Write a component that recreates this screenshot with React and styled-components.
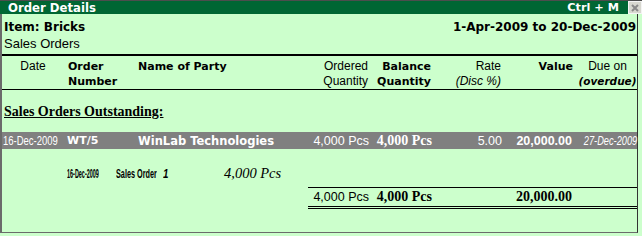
import React from "react";
import styled, { createGlobalStyle } from "styled-components";

const COLS = "62px 70px 166px 70px 63px 70px 75px 59px";
const SANS = `"Liberation Sans", Arial, sans-serif`;
const TAHOMA = `"DejaVu Sans", Verdana, sans-serif`;
const SERIF = `"Liberation Serif", "Times New Roman", serif`;

const JUSTIFY = { left: "flex-start", right: "flex-end", center: "center" };

const GlobalStyle = createGlobalStyle`
  html, body {
    margin: 0;
    padding: 0;
    background: #ccffcc;
  }
  body {
    font-family: ${SANS};
    color: #000;
  }
`;

const Screen = styled.div`
  width: 642px;
  height: 236px;
  overflow: hidden;
  background: #ccffcc;
`;

const TitleBar = styled.div`
  box-sizing: border-box;
  height: 14px;
  border-top: 1px solid #4d4d4d;
  background: #006633;
  color: #fff;
  display: flex;
  align-items: center;
  padding-left: 8px;
  font-family: ${TAHOMA};
  font-weight: bold;
`;

const Title = styled.span`
  font-size: 11.7px;
  flex: 1;
`;

const Shortcut = styled.span`
  font-size: 11.3px;
  margin-right: 9px;
`;

const CloseBox = styled.span`
  box-sizing: border-box;
  width: 14px;
  height: 13px;
  background: #d8d8d0;
  border: 1px solid #f4f4f4;
  display: flex;
  align-items: center;
  justify-content: center;
`;

const Panel = styled.div`
  box-sizing: border-box;
  width: 638px;
  height: 219px;
  border-left: 2px solid #6b6b6b;
  border-right: 1px solid #333;
  border-bottom: 1px solid #6b6b6b;
`;

const Heading = styled.div`
  padding: 5px 1px 0 2px;
  margin-bottom: 3px;
`;

const HeadLine = styled.div`
  display: flex;
  justify-content: space-between;
  height: 17px;
  line-height: 16px;
  font-family: ${TAHOMA};
  font-weight: bold;
  font-size: 12px;
`;

const SubHead = styled.div`
  font-size: 13px;
  line-height: 15px;
`;

const HeaderRow = styled.div`
  display: grid;
  grid-template-columns: ${COLS};
  border-top: 2px solid #000;
  border-bottom: 1px solid #000;
  padding-top: 3px;
`;

const HeadCell = styled.div`
  line-height: 15px;
  font-size: ${(p) => (p.$bold ? "11px" : "12px")};
  font-family: ${(p) => (p.$bold ? TAHOMA : SANS)};
  font-weight: ${(p) => (p.$bold ? "bold" : "normal")};
  text-align: ${(p) => p.$align || "left"};
  padding: ${(p) => p.$pad || "0"};
  white-space: nowrap;

  em {
    font-style: italic;
  }

  b em {
    font-family: ${TAHOMA};
    font-size: 10.5px;
  }
`;

const Section = styled.div`
  margin: 14px 0 12px 2px;
  font-family: ${SERIF};
  font-weight: bold;
  font-size: 14px;
  line-height: 16px;
  text-decoration: underline;
`;

const ItemRow = styled.div`
  display: grid;
  grid-template-columns: ${COLS};
  align-items: center;
  height: 17px;
  background: #808080;
  color: #fff;
`;

const Cell = styled.div`
  display: flex;
  justify-content: ${(p) => JUSTIFY[p.$align || "left"]};
  white-space: nowrap;
  padding: ${(p) => p.$pad || "0"};
  font-family: ${(p) => p.$font || SANS};
  font-size: ${(p) => p.$size || "12.5px"};
  font-weight: ${(p) => (p.$bold ? "bold" : "normal")};
  font-style: ${(p) => (p.$italic ? "italic" : "normal")};
`;

/* condensed face (the original uses a narrow font) */
const Squeeze = styled.span`
  display: inline-block;
  flex-shrink: 0;
  transform: scaleX(${(p) => p.$sx});
  transform-origin: ${(p) => p.$origin || "left"} center;
`;

const SubRow = styled.div`
  display: flex;
  align-items: center;
  height: 18px;
  margin-top: 15px;
  padding-left: 65px;
`;

const Tiny = styled.span`
  display: inline-block;
  width: ${(p) => p.$w}px;
  font-family: ${SANS};
  font-weight: bold;
  font-size: 13px;
  font-style: ${(p) => (p.$italic ? "italic" : "normal")};
  white-space: nowrap;
`;

const SubQty = styled.span`
  font-family: ${SERIF};
  font-style: italic;
  font-size: 14.5px;
  margin-left: 56px;
`;

const TotalRow = styled.div`
  display: grid;
  grid-template-columns: 62px 63px 70px 75px 1fr;
  align-items: center;
  margin: 5px 0 0 306px;
  height: 18px;
  border-top: 1px solid #000;
  border-bottom: 3px double #000;
`;

function CloseIcon() {
  return (
    <svg width="8" height="8" viewBox="0 0 8 8">
      <path d="M1 1 L7 7 M7 1 L1 7" stroke="#8a8a8a" strokeWidth="2" />
    </svg>
  );
}

export default function App() {
  return (
    <Screen>
      <GlobalStyle />
      <TitleBar>
        <Title>Order Details</Title>
        <Shortcut>Ctrl + M</Shortcut>
        <CloseBox>
          <CloseIcon />
        </CloseBox>
      </TitleBar>

      <Panel>
        <Heading>
          <HeadLine>
            <span>Item: Bricks</span>
            <span>1-Apr-2009 to 20-Dec-2009</span>
          </HeadLine>
          <SubHead>Sales Orders</SubHead>
        </Heading>

        <HeaderRow>
          <HeadCell $align="center">Date</HeadCell>
          <HeadCell $bold $pad="0 0 0 4px">
            Order
            <br />
            Number
          </HeadCell>
          <HeadCell $bold $pad="0 0 0 4px">Name of Party</HeadCell>
          <HeadCell $align="right" $pad="0 2px 0 0">
            Ordered
            <br />
            Quantity
          </HeadCell>
          <HeadCell $bold $align="right" $pad="0 2px 0 0">
            Balance
            <br />
            Quantity
          </HeadCell>
          <HeadCell $align="right" $pad="0 2px 0 0">
            Rate
            <br />
            <em>(Disc %)</em>
          </HeadCell>
          <HeadCell $bold $align="right" $pad="0 5px 0 0">Value</HeadCell>
          <HeadCell $align="center">
            Due on
            <br />
            <b>
              <em>(overdue)</em>
            </b>
          </HeadCell>
        </HeaderRow>

        <Section>Sales Orders Outstanding:</Section>

        <ItemRow>
          <Cell $size="13px" $pad="0 0 0 1px">
            <Squeeze $sx={0.73}>16-Dec-2009</Squeeze>
          </Cell>
          <Cell $font={TAHOMA} $size="11px" $bold $pad="0 0 0 3px">WT/5</Cell>
          <Cell $font={TAHOMA} $size="11.5px" $bold $pad="0 0 0 4px">WinLab Technologies</Cell>
          <Cell $align="right" $pad="0 1px 0 0">4,000 Pcs</Cell>
          <Cell $font={SERIF} $size="14px" $bold $align="right" $pad="0 1px 0 0">4,000 Pcs</Cell>
          <Cell $align="right" $pad="0 1px 0 0">5.00</Cell>
          <Cell $bold $align="right" $pad="0 6px 0 0">20,000.00</Cell>
          <Cell $size="12.5px" $italic $align="right">
            <Squeeze $sx={0.74} $origin="right">27-Dec-2009</Squeeze>
          </Cell>
        </ItemRow>

        <SubRow>
          <Tiny $w={49}>
            <Squeeze $sx={0.42}>16-Dec-2009</Squeeze>
          </Tiny>
          <Tiny $w={47}>
            <Squeeze $sx={0.56}>Sales Order</Squeeze>
          </Tiny>
          <Tiny $w={5} $italic>
            <Squeeze $sx={0.75}>1</Squeeze>
          </Tiny>
          <SubQty>4,000 Pcs</SubQty>
        </SubRow>

        <TotalRow>
          <Cell $align="right" $pad="0 1px 0 0">4,000 Pcs</Cell>
          <Cell $font={SERIF} $size="14px" $bold $align="right" $pad="0 1px 0 0">4,000 Pcs</Cell>
          <span />
          <Cell $font={SERIF} $size="14px" $bold $align="right" $pad="0 6px 0 0">20,000.00</Cell>
          <span />
        </TotalRow>
      </Panel>
    </Screen>
  );
}
